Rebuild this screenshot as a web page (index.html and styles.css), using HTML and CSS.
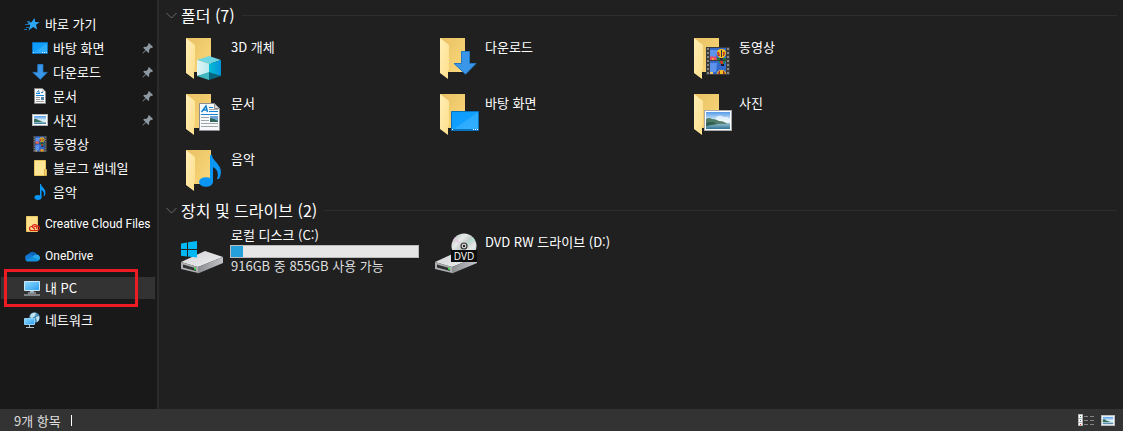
FILE: index.html
```
<!DOCTYPE html>
<html lang="ko">

<head>
    <meta charset="UTF-8">
    <meta name="viewport" content="width=device-width, initial-scale=1.0">
    <title>내 PC</title>
    <link rel="stylesheet" href="styles.css">
</head>

<body>
    <!-- Shared icon shapes -->
    <svg class="sprites" width="0" height="0" aria-hidden="true">
        <defs>
            <linearGradient id="folder-back" x1="0" y1="0" x2="1" y2="1">
                <stop offset="0" stop-color="#e8c164" />
                <stop offset="1" stop-color="#fbd97c" />
            </linearGradient>
            <linearGradient id="folder-front" x1="0" y1="0" x2="1" y2="1">
                <stop offset="0" stop-color="#ffeeb5" />
                <stop offset="1" stop-color="#fddf8c" />
            </linearGradient>
            <linearGradient id="screen" x1="0" y1="0" x2="1" y2="1">
                <stop offset="0" stop-color="#0c9bfb" />
                <stop offset=".5" stop-color="#12a0ff" />
                <stop offset=".52" stop-color="#2cabff" />
                <stop offset="1" stop-color="#35b0ff" />
            </linearGradient>
            <linearGradient id="monitor" x1="0" y1="0" x2="1" y2="1">
                <stop offset="0" stop-color="#8fdcff" />
                <stop offset="1" stop-color="#2d9cf0" />
            </linearGradient>
            <linearGradient id="cube-left" x1="0" y1="0" x2="1" y2="0">
                <stop offset="0" stop-color="#dff5f5" />
                <stop offset="1" stop-color="#b9e9f0" />
            </linearGradient>
            <linearGradient id="cube-right" x1="0" y1="0" x2="1" y2="0">
                <stop offset="0" stop-color="#06bfd3" />
                <stop offset="1" stop-color="#0391dd" />
            </linearGradient>
            <linearGradient id="sky" x1="0" y1="0" x2="0" y2="1">
                <stop offset="0" stop-color="#559be8" />
                <stop offset=".5" stop-color="#d9eef8" />
                <stop offset="1" stop-color="#e8f3f4" />
            </linearGradient>
            <linearGradient id="lake" x1="0" y1="0" x2="0" y2="1">
                <stop offset="0" stop-color="#9fc3cf" />
                <stop offset="1" stop-color="#2f7397" />
            </linearGradient>
            <linearGradient id="drive-top" x1="0" y1="0" x2="1" y2="1">
                <stop offset="0" stop-color="#d2d3d6" />
                <stop offset="1" stop-color="#eeeef0" />
            </linearGradient>
            <linearGradient id="drive-side" x1="0" y1="0" x2="1" y2="0">
                <stop offset="0" stop-color="#8d8e91" />
                <stop offset="1" stop-color="#c2c3c6" />
            </linearGradient>
            <linearGradient id="disc" x1="0" y1="0" x2="1" y2="1">
                <stop offset="0" stop-color="#a9b5b5" />
                <stop offset=".3" stop-color="#e6eae8" />
                <stop offset=".5" stop-color="#c3cbca" />
                <stop offset=".7" stop-color="#e6ece8" />
                <stop offset="1" stop-color="#aab2b5" />
            </linearGradient>
        </defs>
        <symbol id="folder" viewBox="0 0 48 48">
            <path fill="url(#folder-back)" d="M7 4h25v34H15L7 39z" />
            <path fill="url(#folder-front)" d="M7 4l9 7v24l-1 1v9l-8-6z" />
        </symbol>
        <symbol id="drive" viewBox="0 0 48 48">
            <path fill="url(#drive-top)" d="M2 33l24-11 18 6-25 10z" />
            <path fill="#aeafb2" d="M2 33l17 5v6L2 40z" />
            <path fill="#303133" d="M4 35.500l13 3.800v2.700L4 38.600z" />
            <path fill="url(#drive-side)" d="M19 38l25-10v6L19 44.500z" />
            <path fill="#35e04b" d="M15 38.500l2 .5v2l-2-.5z" />
        </symbol>
        <symbol id="photo" viewBox="0 0 28 21">
            <path fill="#a9acae" d="M0 0h28v21H0z" />
            <path fill="#fff" d="M1 1h26v19H1z" />
            <path fill="url(#sky)" d="M2 2h24v17H2z" />
            <path fill="#f4fafc" d="M12 7q4-3 8 0 4-1 6 2v3H10z" opacity=".7" />
            <path fill="url(#lake)" d="M2 13h24v6H2z" />
            <path fill="#4f7b68" d="M2 9q3-2 6 0 4 0 7 2 5 0 8 3-9-1-12 1-5 0-9 1z" />
            <path fill="#2f5f51" d="M2 13q5-2 10 0-4 2-10 3z" />
        </symbol>
        <symbol id="photo-small" viewBox="0 0 16 12">
            <path fill="#b4b6b8" d="M0 0h16v12H0z" />
            <path fill="#fff" d="M1 1h14v10H1z" />
            <path fill="url(#sky)" d="M2 2h12v8H2z" />
            <path fill="#38705c" d="M2 5q2-1 4 1l5 1.500L7 8H2z" />
            <path fill="url(#lake)" d="M2 8h12v2H2z" />
        </symbol>
        <symbol id="film" viewBox="0 0 24 28">
            <path fill="#3b3b3b" d="M0 0h24v28H0z" />
            <path fill="#3468cb" d="M4 1h16v12H4zM4 14h16v13H4z" />
            <path fill="#5d93ea" d="M4 3h8l-2 7H4zM4 16h7l-1 9H4z" />
            <path fill="#e74e63" d="M4 10l2-1 2 1 2-1 1 4H4z" />
            <path fill="#f3a12f" d="M6 11h2v2H6z" />
            <path fill="#1d7a34" d="M11 11h9v2h-9z" />
            <path fill="#f2c021" d="M11 6q0-4 4.500-4T20 6q0 3-3 5h-3q-3-2-3-5z" />
            <path fill="#b9352a" d="M11 5h2l1 4h-2zM17 5h2l-1 4h-1z" />
            <path fill="#322748" d="M15 3h1v7h-1zM14 11h3v2h-3z" />
            <path fill="#1b8a4c" d="M12 14h8l-2 3h-4z" />
            <path fill="#d5322f" d="M14 14h3v4h-2z" />
            <path fill="#161b33" d="M15 17h3v2h-3z" />
            <path fill="#f2c021" d="M11 27q0-4 4.500-4t4.500 4z" />
            <path fill="#a42c28" d="M13 24h1v3h-2zM17 24h1l1 3h-2z" />
            <path fill="#f0c86a" d="M4 25h3v2H4z" />
            <path stroke="#a2a2a2" stroke-width="1.500" stroke-dasharray="2 2" d="M2 1v26M22 1v26" />
        </symbol>
        <symbol id="note" viewBox="0 0 22 32">
            <ellipse cx="7" cy="27" rx="7" ry="4.800" fill="#0a96f5" />
            <path fill="#0a96f5" d="M11 0h2q0 3 4 7 8 8 3 17h-2q3-8-4-12v15h-3z" />
        </symbol>
        <symbol id="arrow" viewBox="0 0 24 24">
            <path fill="#3a96e8" stroke="#2378c4" d="M8.500.5h8v12h6.500L12.500 23.200 1 12.500h7.500z" />
        </symbol>
        <symbol id="pin" viewBox="0 0 12 12">
            <path fill="#8d979f" d="M7 1l4 4-1 1-1-.3L7 8l.3 2-1 1-2.300-2.500L1 11.500.5 11l3-3L1.200 5.700l1-1L4 5l2.300-2L6 2z" />
        </symbol>
    </svg>

    <div class="explorer">
        <nav class="sidebar">
            <ul class="tree">
                <li>
                    <a class="node" href="#">
                        <svg class="icon" viewBox="0 0 16 16">
                            <path fill="#2ba7f5" d="M10.500 2l.7 4 4.500.3-3.700 2.500 1.200 4.700-4-2.600-4.700 3.600 1.700-5.300-3-2.700 4.300-.2z" />
                            <path stroke="#1b6fae" d="M3 5.500h3M1 8.500h4M2 11.500h3M0 13.500h3" />
                        </svg>
                        바로 가기
                    </a>
                    <ul class="branch">
                        <li>
                            <a class="node" href="#">
                                <svg class="icon" viewBox="0 0 16 16">
                                    <path fill="url(#screen)" stroke="#0a72bc" d="M.5 2.500h15v11H.5z" />
                                    <path fill="#d8f0ff" d="M1 12h1v1H1zM10 12h1v1h-1zM12 12h1v1h-1zM14 12h1v1h-1z" />
                                </svg>
                                바탕 화면
                                <svg class="pin"><use href="#pin" /></svg>
                            </a>
                        </li>
                        <li>
                            <a class="node" href="#">
                                <svg class="icon"><use href="#arrow" /></svg>
                                다운로드
                                <svg class="pin"><use href="#pin" /></svg>
                            </a>
                        </li>
                        <li>
                            <a class="node" href="#">
                                <svg class="icon" viewBox="0 0 16 16">
                                    <path fill="#fafafa" stroke="#8a8a8a" d="M2.500.5h8l3 3v12h-11z" />
                                    <path fill="#c8c8c8" d="M10 1l3 3h-3z" />
                                    <path stroke="#1a86d8" d="M4 5.500h4M9 4.500h2M4 7.500h8M5 4.500l1.500-2 1 3" fill="none" />
                                    <path stroke="#9a9a9a" d="M4 9.500h4M4 11.500h4M4 13.500h8" />
                                    <path fill="#4b86a8" d="M9 9h3v3H9z" />
                                </svg>
                                문서
                                <svg class="pin"><use href="#pin" /></svg>
                            </a>
                        </li>
                        <li>
                            <a class="node" href="#">
                                <svg class="icon"><use href="#photo-small" /></svg>
                                사진
                                <svg class="pin"><use href="#pin" /></svg>
                            </a>
                        </li>
                        <li>
                            <a class="node" href="#">
                                <svg class="icon"><use href="#film" /></svg>
                                동영상
                            </a>
                        </li>
                        <li>
                            <a class="node" href="#">
                                <svg class="icon" viewBox="0 0 16 16">
                                    <path fill="#ffe694" stroke="#e8c55e" d="M2.500.5h11v15h-11z" />
                                    <path fill="#f8d873" stroke="#d6b04a" d="M12.500 9.500h2v6h-2z" />
                                </svg>
                                블로그 썸네일
                            </a>
                        </li>
                        <li>
                            <a class="node" href="#">
                                <svg class="icon"><use href="#note" /></svg>
                                음악
                            </a>
                        </li>
                    </ul>
                </li>
                <li>
                    <a class="node latin" href="#">
                        <svg class="icon" viewBox="0 0 16 16">
                            <path fill="#ffe08a" stroke="#eac765" d="M2.500.5h11v15h-11z" />
                            <path fill="none" stroke="#d8231c" stroke-width="1.200" d="M8 10.500h-.5a2 2 0 0 0 0 4H13a2.300 2.300 0 0 0 .3-4.600 3 3 0 0 0-5.300.6l3 3M10 11a1.500 1.500 0 0 1 2.500 2" />
                        </svg>
                        Creative Cloud Files
                    </a>
                </li>
                <li>
                    <a class="node latin" href="#">
                        <svg class="icon" viewBox="0 0 16 16">
                            <path fill="#0c64b8" d="M4 6.500a5 5 0 0 1 9 0l-4 4-7-2z" />
                            <path fill="#1177d1" d="M3.500 6.500q2.500-1 5 .8l2 2.200-7 3.700A3.500 3.500 0 0 1 3.500 6.500z" />
                            <path fill="#28a8ea" d="M8 9.500q2-3.500 5-3a3.500 3.500 0 0 1 2.500 5.300L11 12z" />
                            <path fill="#1490df" d="M1.500 12l7-3.200 7 3q-1 1.700-3 1.700h-9q-1.500-.2-2-1.500z" />
                        </svg>
                        OneDrive
                    </a>
                </li>
                <li class="current">
                    <a class="node" href="#" aria-current="page">
                        <svg class="icon" viewBox="0 0 16 16">
                            <path fill="url(#monitor)" stroke="#c9eaff" d="M.5 1.500h15v9H.5z" />
                            <path fill="#9fb3c0" d="M6 11h4v1.500H6z" />
                            <path stroke="#c7d3da" d="M4 13h8M0 15h16" />
                        </svg>
                        내 PC
                    </a>
                    <span class="marker"></span>
                </li>
                <li>
                    <a class="node" href="#">
                        <svg class="icon" viewBox="0 0 16 16">
                            <circle cx="10.500" cy="5.500" r="5.300" fill="#4a8fb5" />
                            <path fill="#c3e4ef" d="M7 2q3-2 5-1l-1 3-3 2-2-1zM12 5l3-1q1 4-2 6z" />
                            <path fill="url(#monitor)" stroke="#8fd0f5" d="M.5 6.500h10v6H.5z" />
                            <path stroke="#b8c9d3" d="M5.500 13v2M2 15.500h8" />
                        </svg>
                        네트워크
                    </a>
                </li>
            </ul>
        </nav>

        <main class="content">
            <section>
                <h2 class="group-title">
                    <button class="toggle" type="button">
                        <svg class="chevron" viewBox="0 0 11 7"><path d="M.5 1l5 5 5-5" /></svg>
                        폴더 (7)
                    </button>
                </h2>
                <div class="tiles">
                    <a class="tile" href="#">
                        <svg class="tile-icon" viewBox="0 0 48 48">
                            <use href="#folder" />
                            <path fill="#6dd6e2" d="M30 22l12 4-12 4-12-4z" />
                            <path fill="url(#cube-left)" d="M18 26l12 4v9l-12 3z" />
                            <path fill="url(#cube-right)" d="M30 30l12-4v16l-12-3z" />
                            <path fill="#3fb7be" d="M30 38v8l-12-4z" />
                            <path fill="#086882" d="M30 38v8l12-4z" />
                        </svg>
                        <span class="tile-text">3D 개체</span>
                    </a>
                    <a class="tile" href="#">
                        <svg class="tile-icon" viewBox="0 0 48 48">
                            <use href="#folder" />
                            <use href="#arrow" x="20" y="17" width="24" height="24" />
                        </svg>
                        <span class="tile-text">다운로드</span>
                    </a>
                    <a class="tile" href="#">
                        <svg class="tile-icon" viewBox="0 0 48 48">
                            <use href="#folder" />
                            <use href="#film" x="19" y="13" width="24" height="28" />
                        </svg>
                        <span class="tile-text">동영상</span>
                    </a>
                    <a class="tile" href="#">
                        <svg class="tile-icon" viewBox="0 0 48 48">
                            <use href="#folder" />
                            <path fill="#f8f9fa" stroke="#8b8d90" d="M20.500 13.500h15l5 5v22h-20z" />
                            <path fill="#d5d7d9" stroke="#8b8d90" d="M35.500 13.500v5h5z" />
                            <path fill="none" stroke="#1583cf" stroke-width="1.500" d="M22.500 22l4.500-6 1.500 6M24 20h4" />
                            <path stroke="#1583cf" d="M30 17.500h4M30 21.500h9M22 24.500h17" />
                            <path stroke="#a2a5a8" d="M30 19.500h9M22 27.500h8M22 30.500h8M22 33.500h17M22 36.500h17" />
                            <path fill="#6ea5d0" d="M31 26h8v6h-8z" />
                            <path fill="#2f665b" d="M31 28l4 1 4 2v1h-8z" />
                        </svg>
                        <span class="tile-text">문서</span>
                    </a>
                    <a class="tile" href="#">
                        <svg class="tile-icon" viewBox="0 0 48 48">
                            <use href="#folder" />
                            <path fill="url(#screen)" stroke="#0a72bc" d="M18.500 21.500h27v19h-27z" />
                            <path fill="#0877cb" d="M19 39h26v1H19z" />
                            <path fill="#fff" d="M19 39h1v1h-1zM40 39h1v1h-1zM42 39h1v1h-1zM44 39h1v1h-1z" />
                        </svg>
                        <span class="tile-text">바탕 화면</span>
                    </a>
                    <a class="tile" href="#">
                        <svg class="tile-icon" viewBox="0 0 48 48">
                            <use href="#folder" />
                            <use href="#photo" x="17" y="20" width="28" height="21" />
                        </svg>
                        <span class="tile-text">사진</span>
                    </a>
                    <a class="tile" href="#">
                        <svg class="tile-icon" viewBox="0 0 48 48">
                            <use href="#folder" />
                            <use href="#note" x="20" y="9" width="22" height="32" />
                        </svg>
                        <span class="tile-text">음악</span>
                    </a>
                </div>
            </section>

            <section>
                <h2 class="group-title">
                    <button class="toggle" type="button">
                        <svg class="chevron" viewBox="0 0 11 7"><path d="M.5 1l5 5 5-5" /></svg>
                        장치 및 드라이브 (2)
                    </button>
                </h2>
                <div class="tiles">
                    <a class="tile" href="#">
                        <svg class="tile-icon" viewBox="0 0 48 48">
                            <use href="#drive" />
                            <path fill="#00b9f4" d="M2 14.500l6-1v6.500H2zM9 13.300l9-1.300v8H9zM2 21h6v6.500l-6-.8zM9 21h9v7.500l-9-1z" />
                        </svg>
                        <span class="tile-text drive-text">
                            <label for="disk-c">로컬 디스크 (C:)</label>
                            <progress id="disk-c" class="usage" value="61" max="916"></progress>
                            <span class="free">916GB 중 855GB 사용 가능</span>
                        </span>
                    </a>
                    <a class="tile" href="#">
                        <svg class="tile-icon" viewBox="0 0 48 48">
                            <use href="#drive" />
                            <circle cx="31" cy="17" r="12.500" fill="url(#disc)" />
                            <path fill="#e9c6e3" opacity=".6" d="M31 17L20 11l2-3z" />
                            <path fill="#a9ead0" opacity=".6" d="M31 17l9-9 2 3z" />
                            <circle cx="31" cy="17" r="3" fill="#ddd" stroke="#333" stroke-width="1.200" />
                            <circle cx="31" cy="17" r="1.200" fill="#222" />
                            <path fill="#0c0c0c" d="M18 21h26v12H18z" />
                            <text class="disc-label" x="31" y="31">DVD</text>
                        </svg>
                        <span class="tile-text">DVD RW 드라이브 (D:)</span>
                    </a>
                </div>
            </section>
        </main>
    </div>

    <footer class="status">
        <span class="count">9개 항목</span>
        <button class="view" type="button" aria-label="자세히">
            <svg width="16" height="12" viewBox="0 0 16 12">
                <path fill="#b5b5b5" d="M0 0h5v12H0z" />
                <path fill="#fff" d="M1 1h3v3H1zM1 5h3v3H1zM1 9h3v2H1z" />
                <path fill="#3c8f5c" d="M2 2h1v1H2z" />
                <path fill="#3172c4" d="M2 6h1v1H2z" />
                <path fill="#c63333" d="M2 10h1v1H2z" />
                <path stroke="#858585" d="M6 2.500h4M12 2.500h4M6 6.500h4M12 6.500h4M6 10.500h4M12 10.500h4" />
            </svg>
        </button>
        <button class="view" type="button" aria-label="큰 아이콘">
            <svg width="14" height="11" viewBox="0 0 16 12" preserveAspectRatio="none"><use href="#photo-small" width="16" height="12" /></svg>
        </button>
    </footer>
</body>

</html>
```
FILE: styles.css
```
* {
    box-sizing: border-box;
}

body {
    display: flex;
    flex-direction: column;
    min-height: 100vh;
    margin: 0;
    background-color: #202020;
    color: #fff;
    font-family: "Noto Sans CJK KR", sans-serif;
    font-size: 13px;
    line-height: 16px;
}

a {
    color: inherit;
    text-decoration: none;
}

ul {
    margin: 0;
    padding: 0;
    list-style: none;
}

svg {
    display: block;
    flex: none;
}

.sprites {
    position: absolute;
}

.explorer {
    display: flex;
    flex: 1;
}

/* Sidebar */
.sidebar {
    width: 159px;
    padding: 13px 2px 13px 1px;
    background-color: #191919;
    border-right: 2px solid #2b2b2b;
}

.tree {
    display: flex;
    flex-direction: column;
    gap: 10px;
}

.branch {
    display: flex;
    flex-direction: column;
    gap: 2px;
    padding-top: 2px;
}

.node {
    display: flex;
    align-items: center;
    gap: 5px;
    height: 22px;
    padding-left: 23px;
    white-space: nowrap;
}

.branch .node {
    padding-left: 31px;
}

.node:hover {
    background-color: #2a2a2a;
}

.latin {
    font-family: Roboto, sans-serif;
    font-size: 12px;
}

.icon {
    width: 16px;
    height: 16px;
}

.pin {
    width: 12px;
    height: 12px;
    margin-left: auto;
    margin-right: 1px;
}

.current {
    position: relative;
}

.current .node {
    background-color: #333;
}

.marker {
    position: absolute;
    top: -8px;
    left: 3px;
    width: 134px;
    height: 38px;
    border: 3px solid #ed1c24;
    pointer-events: none;
}

/* Content */
.content {
    flex: 1;
    padding: 3px 6px 3px 7px;
}

.group-title {
    display: flex;
    align-items: center;
    gap: 7px;
    height: 24px;
    margin: 0 0 3px;
}

.group-title::after {
    content: "";
    flex: 1;
    height: 1px;
    background-color: #2d2d2d;
}

.toggle {
    display: flex;
    align-items: center;
    gap: 4px;
    padding: 0;
    border: none;
    background: none;
    color: #fff;
    font-family: inherit;
    font-size: 16px;
    line-height: 22px;
    cursor: pointer;
}

.chevron {
    width: 11px;
    height: 7px;
    fill: none;
    stroke: #6a6a6a;
}

.tiles {
    display: grid;
    grid-template-columns: repeat(auto-fill, 254px);
    padding-left: 13px;
}

.tile {
    display: flex;
    gap: 4px;
    height: 56px;
}

.tile-icon {
    width: 48px;
    height: 48px;
    margin-top: 4px;
}

.tile-text {
    padding-top: 9px;
}

.drive-text {
    display: flex;
    flex-direction: column;
    padding-top: 2px;
}

.usage {
    appearance: none;
    width: 189px;
    height: 13px;
    margin: 2px 0 0 -1px;
    border: 1px solid #bcbcbc;
}

.usage::-webkit-progress-bar {
    background-color: #e6e6e6;
}

.usage::-webkit-progress-value {
    background-color: #26a0da;
}

.free {
    color: #dedede;
}

.disc-label {
    fill: #fff;
    font-family: "Open Sans", sans-serif;
    font-size: 10px;
    text-anchor: middle;
}

/* Status bar */
.status {
    display: flex;
    align-items: center;
    gap: 7px;
    height: 22px;
    padding: 0 8px 0 14px;
    background-color: #333;
}

.count {
    margin-right: auto;
    padding-right: 10px;
    border-right: 1px solid #fff;
    color: #dedede;
    line-height: 11px;
}

.view {
    padding: 0;
    border: none;
    background: none;
    cursor: pointer;
}
```
